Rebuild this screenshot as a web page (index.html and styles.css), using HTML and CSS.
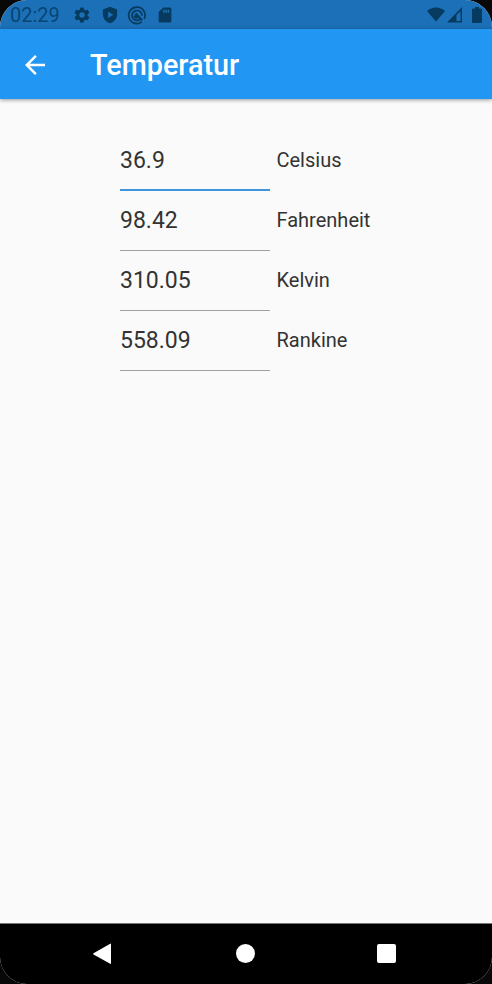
FILE: index.html
```html
<!DOCTYPE html>
<html lang="de">
  <head>
    <meta charset="UTF-8" />
    <meta name="viewport" content="width=device-width, initial-scale=1.0" />
    <title>Temperatur</title>
    <link rel="stylesheet" href="styles.css">
  </head>
  <body>
    <div class="phone">
      <div class="statusBar">
        <span class="clock">02:29</span>
        <div class="notifications">
          <svg width="18" height="18" viewBox="0 0 24 24"><path d="M19.4 13a7.8 7.8 0 0 0 0-2l2.1-1.6c.2-.2.3-.5.1-.7l-2-3.4c-.1-.2-.4-.3-.6-.2l-2.5 1a7 7 0 0 0-1.7-1l-.4-2.6a.5.5 0 0 0-.5-.5h-4a.5.5 0 0 0-.5.5L9 5.1a7 7 0 0 0-1.7 1l-2.5-1c-.2-.1-.5 0-.6.2l-2 3.4c-.1.2-.1.5.1.7L4.5 11a7.8 7.8 0 0 0 0 2l-2.2 1.6c-.2.2-.2.5-.1.7l2 3.4c.1.2.4.3.6.2l2.5-1a7 7 0 0 0 1.7 1l.4 2.6c0 .3.2.5.5.5h4c.3 0 .5-.2.5-.5l.4-2.6a7 7 0 0 0 1.7-1l2.5 1c.2.1.5 0 .6-.2l2-3.4c.1-.2.1-.5-.1-.7zM12 15.6a3.6 3.6 0 1 1 0-7.2 3.6 3.6 0 0 1 0 7.2z"/></svg>
          <svg width="18" height="18" viewBox="0 0 24 24"><path fill-rule="evenodd" d="M12 1 2.5 4.5V11c0 5.6 4 10.7 9.5 12 5.5-1.3 9.5-6.4 9.5-12V4.5zM9.500 7.5V16l7-4.25z"/></svg>
          <svg width="20" height="20" viewBox="0 0 20 20" fill="none" stroke="#063a5e" stroke-width="1.7"><path d="M14.8 16.9a8.2 8.2 0 1 1 2.4-2.9M13.9 13.4a4.9 4.9 0 1 1 1-2.6"/><path d="m8.5 8.6 6.5 6.7M7.5 10.5a2.5 2.5 0 0 0 3 1.9" stroke-width="2.3"/></svg>
          <svg width="18" height="18" viewBox="0 0 24 24"><path fill-rule="evenodd" d="M18.5 2H10L3.5 8v12a2 2 0 0 0 2 2h13a2 2 0 0 0 2-2V4a2 2 0 0 0-2-2zM9.500 5v4h2V5zm3 0v4h2V5zm3 0v4h2V5z"/></svg>
        </div>
        <div class="system">
          <svg width="20" height="20" viewBox="0 0 20 20"><path d="M0 6c5-4.800 13-4.800 18 0l-9 10.500z"/></svg>
          <svg width="16" height="20" viewBox="0 0 16 20"><path fill-rule="evenodd" d="M0 17.500 15 2v15.500zM9.500 10v6h4V6z"/></svg>
          <svg width="10" height="20" viewBox="0 0 10 20"><path d="M3 2h4v1.500h2a1 1 0 0 1 1 1V17a1 1 0 0 1-1 1H1a1 1 0 0 1-1-1V4.500a1 1 0 0 1 1-1h2z"/></svg>
        </div>
      </div>
      <header class="appBar">
        <svg class="back" width="30" height="30" viewBox="0 0 24 24"><path d="M20 11H7.830l5.590-5.590L12 4l-8 8 8 8 1.410-1.410L7.830 13H20z"/></svg>
        <h1>Temperatur</h1>
      </header>
      <main class="units">
        <div class="unit">
          <div class="value active">36.9</div>
          <div class="label">Celsius</div>
        </div>
        <div class="unit">
          <div class="value">98.42</div>
          <div class="label">Fahrenheit</div>
        </div>
        <div class="unit">
          <div class="value">310.05</div>
          <div class="label">Kelvin</div>
        </div>
        <div class="unit">
          <div class="value">558.09</div>
          <div class="label">Rankine</div>
        </div>
      </main>
      <nav class="navBar">
        <svg width="20" height="22" viewBox="0 0 20 22"><path d="M19 1v19.500a.5.5 0 0 1-.8.300L1.500 11.500a.8.8 0 0 1 0-1.300L18.200.7a.5.5 0 0 1 .8.300z"/></svg>
        <div class="home"></div>
        <div class="recent"></div>
      </nav>
    </div>
  </body>
</html>
```

FILE: styles.css
```css
body {
  margin: 0;
  background-color: #080808;
  font-family: Roboto, "Liberation Sans", sans-serif;
}
svg {
  display: block;
}
.phone {
  display: flex;
  flex-direction: column;
  height: 984px;
  border-radius: 27px;
  overflow: hidden;
  background-color: #fafafa;
}

.statusBar {
  display: flex;
  align-items: center;
  box-sizing: border-box;
  height: 29px;
  padding: 0 10px;
  background-color: #1c70b7;
  color: #084575;
}
.statusBar svg {
  fill: #063a5e;
}
.clock {
  width: 63px;
  font-size: 20px;
  line-height: 29px;
  padding-top: 2px;
}
.notifications {
  display: flex;
  align-items: center;
  gap: 9px;
}
.notifications svg:nth-child(2) {
  margin-left: 1px;
}
.notifications svg:nth-child(3) {
  margin-left: -1px;
  fill: none;
}
.system {
  display: flex;
  margin-left: auto;
}
.system svg:last-child {
  margin-left: 9px;
}

.appBar {
  display: flex;
  align-items: center;
  box-sizing: border-box;
  height: 70px;
  padding: 2px 0 0 20px;
  background-color: #2196f3;
  color: white;
  box-shadow: 0 1px 4px rgba(0, 0, 0, 0.4);
}
.back {
  fill: white;
}
h1 {
  margin: 0 0 0 40px;
  font-size: 28.8px;
  font-weight: 500;
}

.units {
  flex: 1;
  padding: 31px 0 0 120px;
}
.unit {
  display: flex;
  height: 60px;
  color: #333;
}
.value {
  box-sizing: border-box;
  width: 150px;
  height: 61px;
  border-bottom: 1px solid #a0a0a0;
  font-size: 23px;
  line-height: 61px;
}
.value.active {
  border-bottom: 2px solid #4095dd;
}
.label {
  margin-left: 6.5px;
  font-size: 20px;
  line-height: 61px;
}

.navBar {
  display: flex;
  align-items: center;
  box-sizing: border-box;
  height: 61px;
  padding: 0 0 1px 92px;
  background-color: black;
  border-top: 1px solid #777;
}
.navBar svg {
  fill: white;
}
.home {
  width: 19px;
  height: 19px;
  margin-left: 124px;
  border-radius: 50%;
  background-color: white;
}
.recent {
  width: 19px;
  height: 19px;
  margin-left: 122px;
  border-radius: 2px;
  background-color: white;
}
```
